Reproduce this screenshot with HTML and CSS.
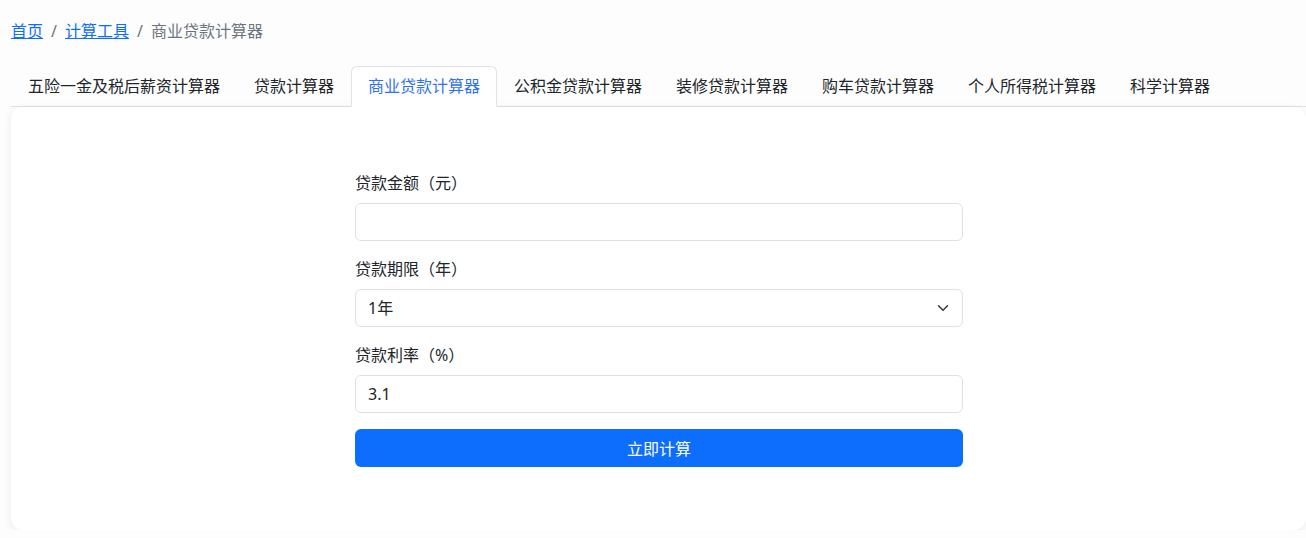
FILE: index.html
```html
<!DOCTYPE html>
<html lang="zh-CN">
<head>
    <meta charset="UTF-8">
    <meta name="viewport" content="width=device-width, initial-scale=1.0">
    <title>商业贷款计算器</title>
    <link rel="stylesheet" href="styles.css">
</head>
<body>
    <div class="page">
        <nav class="breadcrumb">
            <a href="#">首页</a>
            <span class="divider">/</span>
            <a href="#">计算工具</a>
            <span class="divider">/</span>
            <span class="current">商业贷款计算器</span>
        </nav>

        <ul class="tabs">
            <li><a href="#">五险一金及税后薪资计算器</a></li>
            <li><a href="#">贷款计算器</a></li>
            <li><a href="#" class="active">商业贷款计算器</a></li>
            <li><a href="#">公积金贷款计算器</a></li>
            <li><a href="#">装修贷款计算器</a></li>
            <li><a href="#">购车贷款计算器</a></li>
            <li><a href="#">个人所得税计算器</a></li>
            <li><a href="#">科学计算器</a></li>
        </ul>

        <div class="card">
            <form class="loan-form" onsubmit="return false;">
                <div class="field">
                    <label for="amount">贷款金额（元）</label>
                    <input type="text" id="amount" class="control">
                </div>

                <div class="field">
                    <label for="years">贷款期限（年）</label>
                    <div class="select-wrap">
                        <select id="years" class="control">
                            <option>1年</option>
                            <option>2年</option>
                            <option>3年</option>
                            <option>5年</option>
                            <option>10年</option>
                            <option>20年</option>
                            <option>30年</option>
                        </select>
                        <svg class="chevron" width="16" height="12" viewBox="0 0 16 16">
                            <path d="M2 5l6 6 6-6" fill="none" stroke="#343a40" stroke-width="2" stroke-linecap="round" stroke-linejoin="round"/>
                        </svg>
                    </div>
                </div>

                <div class="field">
                    <label for="rate">贷款利率（%）</label>
                    <input type="text" id="rate" class="control" value="3.1">
                </div>

                <button type="submit" class="submit">立即计算</button>
            </form>
        </div>
    </div>
</body>
</html>
```

FILE: styles.css
```css
* {
    margin: 0;
    padding: 0;
    box-sizing: border-box;
}

body {
    font-family: "Noto Sans", "Noto Sans CJK SC", sans-serif;
    font-size: 16px;
    line-height: 24px;
    color: #212529;
    background: #fdfdfe;
}

.page {
    padding: 19px 0 0 11px;
}

/* Breadcrumb */
.breadcrumb {
    display: flex;
    align-items: center;
    margin-bottom: 23px;
}

.breadcrumb a {
    color: #0d6efd;
    text-decoration: underline;
}

.breadcrumb .divider {
    color: #6c757d;
    padding: 0 8px;
}

.breadcrumb .current {
    color: #6c757d;
}

/* Tabs */
.tabs {
    display: flex;
    list-style: none;
    border-bottom: 1px solid #dee2e6;
}

.tabs li {
    margin-bottom: -1px;
}

.tabs a {
    display: block;
    padding: 7px 16px 8px;
    color: #212529;
    text-decoration: none;
    border: 1px solid transparent;
    border-top-left-radius: 6px;
    border-top-right-radius: 6px;
}

.tabs a.active {
    color: #2f72f0;
    background: #fff;
    border-color: #dee2e6 #dee2e6 #fff;
}

/* Card */
.card {
    background: #fff;
    border-radius: 12px;
    box-shadow: 0 2px 8px rgba(0, 0, 0, 0.08);
    padding: 64px 0 63px 1px;
}

.loan-form {
    width: 608px;
    margin: 0 auto;
}

.field {
    margin-bottom: 16px;
}

.field label {
    display: block;
    margin-bottom: 8px;
}

.control {
    display: block;
    width: 100%;
    height: 38px;
    padding: 6px 12px;
    font-family: inherit;
    font-size: 16px;
    color: #212529;
    background: #fff;
    border: 1px solid #dee2e6;
    border-radius: 6px;
    outline: none;
}

.select-wrap {
    position: relative;
}

.select-wrap select {
    appearance: none;
    -webkit-appearance: none;
    padding-right: 40px;
}

.chevron {
    position: absolute;
    right: 12px;
    top: 13px;
    pointer-events: none;
}

/* Submit button */
.submit {
    display: block;
    width: 100%;
    height: 38px;
    background: #0d6efd;
    color: #fff;
    border: none;
    border-radius: 6px;
    font-family: inherit;
    font-size: 16px;
    cursor: pointer;
}
```
